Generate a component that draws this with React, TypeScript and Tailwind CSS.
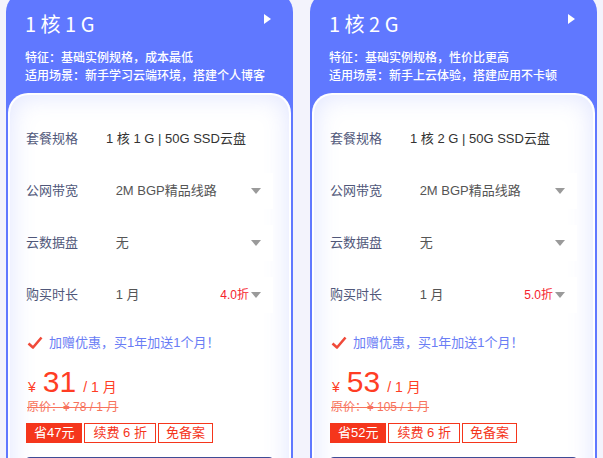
const FONT = { fontFamily: '"Liberation Sans", "Noto Sans CJK SC", sans-serif' };
const CJK = { fontFamily: '"Noto Sans CJK SC", "Liberation Sans", sans-serif' };

interface Plan {
  title: string;
  feature: string;
  scene: string;
  spec: string;
  discount: string;
  price: string;
  original: string;
  save: string;
}

const plans: Plan[] = [
  {
    title: "1 核 1 G",
    feature: "特征：基础实例规格，成本最低",
    scene: "适用场景：新手学习云端环境，搭建个人博客",
    spec: "1 核 1 G | 50G SSD云盘",
    discount: "4.0折",
    price: "31",
    original: "原价：¥ 78 / 1 月",
    save: "省47元",
  },
  {
    title: "1 核 2 G",
    feature: "特征：基础实例规格，性价比更高",
    scene: "适用场景：新手上云体验，搭建应用不卡顿",
    spec: "1 核 2 G | 50G SSD云盘",
    discount: "5.0折",
    price: "53",
    original: "原价：¥ 105 / 1 月",
    save: "省52元",
  },
];

const Arrow = () => (
  <svg width="10" height="6" viewBox="0 0 10 6" className="shrink-0">
    <path d="M0 0 H10 L5 6 Z" fill="#9a9a9a" />
  </svg>
);

const Select = ({ value, extra }: { value: string; extra?: string }) => (
  <div className="flex h-[36px] w-[168px] items-center bg-white pl-[10px] pr-[12px] text-[13px] text-[#555]">
    <span className="flex-1">{value}</span>
    {extra && <span className="mr-[2px] text-[12px] text-[#f5222d]">{extra}</span>}
    <Arrow />
  </div>
);

const Row = ({ label, children }: { label: string; children: React.ReactNode }) => (
  <div className="flex h-[36px] items-center">
    <span className="w-[80px] text-[13px] text-[#50577a]">{label}</span>
    {children}
  </div>
);

const Card = ({ plan }: { plan: Plan }) => (
  <div className="w-[287px] rounded-t-[20px] bg-[#6078ff] px-[2px]">
    {/* header */}
    <div className="px-[17px] pt-[19px] pb-[8px] text-white">
      <div className="flex items-start justify-between">
        <h2 className="text-[20px] leading-[26px] font-normal" style={CJK}>
          {plan.title}
        </h2>
        <svg width="8" height="10" viewBox="0 0 8 10" className="mt-[3px] mr-[2px]">
          <path d="M0 0 L7 5 L0 10 Z" fill="#fff" />
        </svg>
      </div>
      <div className="mt-[12px] text-[12px] leading-[18px] font-medium">
        <p>{plan.feature}</p>
        <p>{plan.scene}</p>
      </div>
    </div>
    {/* body */}
    <div className="rounded-t-[20px] border-2 border-b-0 border-white/90 bg-white px-[16px] pt-[26px] pb-[12px] shadow-[inset_0_0_26px_rgba(96,120,255,0.2)]">
      <div className="flex flex-col gap-[16px]">
        <Row label="套餐规格">
          <span className="text-[13px] text-[#333]">{plan.spec}</span>
        </Row>
        <Row label="公网带宽">
          <Select value="2M BGP精品线路" />
        </Row>
        <Row label="云数据盘">
          <Select value="无" />
        </Row>
        <Row label="购买时长">
          <Select value="1 月" extra={plan.discount} />
        </Row>
      </div>
      <div className="mt-[20px] flex items-center gap-[6px] pl-[1px] text-[13px] text-[#6a7df5]">
        <svg width="16" height="14" viewBox="0 0 16 14">
          <path d="M1.5 7.5 L6 11.5 L14.5 1.5" fill="none" stroke="#f04a3a" strokeWidth="2.6" strokeLinejoin="round" />
        </svg>
        <span>加赠优惠，买1年加送1个月！</span>
      </div>
      <div className="mt-[12px] flex items-baseline pl-[2px] text-[#ff3d24]">
        <span className="text-[14px]">¥</span>
        <span className="ml-[7px] text-[30px] leading-[34px]">{plan.price}</span>
        <span className="ml-[7px] text-[14px]">/ 1 月</span>
      </div>
      <p className="pl-[1px] text-[12px] leading-[16px] text-[#f7735c] line-through">{plan.original}</p>
      <div className="mt-[8px] flex gap-[2px] text-[13px]">
        <span className="flex h-[20px] items-center bg-[#f5361c] px-[8px] text-white">{plan.save}</span>
        <span className="flex h-[20px] items-center border border-[#f5361c] px-[8px] text-[#f5361c]">续费 6 折</span>
        <span className="flex h-[20px] items-center border border-[#f5361c] px-[7px] text-[#f5361c]">免备案</span>
      </div>
      <button aria-label="立即购买" className="mt-[14px] block h-[40px] w-full rounded-[4px] bg-[#3f4c96]" />
    </div>
  </div>
);

export default function App() {
  return (
    <div className="h-[458px] overflow-hidden bg-[#f3f3fc]" style={FONT}>
      <div className="-mt-[8px] flex gap-[17px] pl-[6px]">
        {plans.map((p) => (
          <Card key={p.title} plan={p} />
        ))}
      </div>
    </div>
  );
}
